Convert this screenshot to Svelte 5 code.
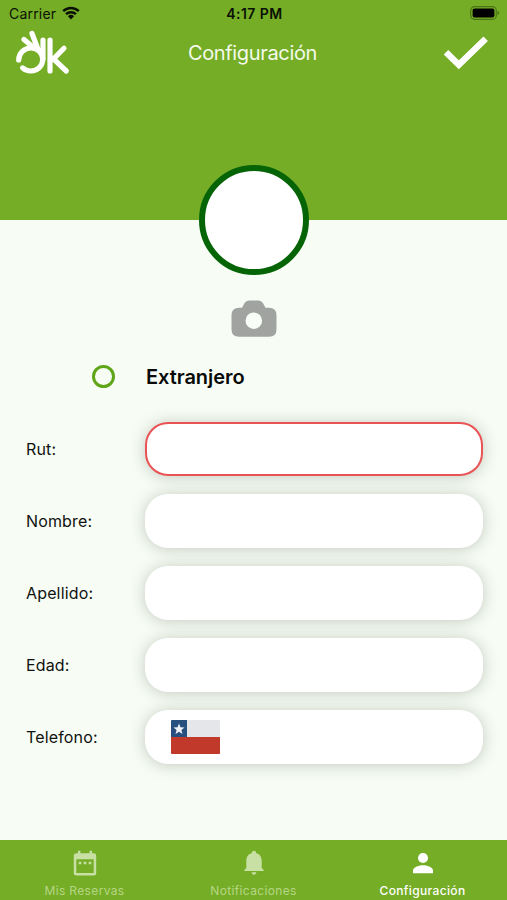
<script lang="ts">
  type Field = { id: string; label: string; invalid?: boolean; flag?: boolean };

  const fields: Field[] = [
    { id: 'rut', label: 'Rut:', invalid: true },
    { id: 'nombre', label: 'Nombre:' },
    { id: 'apellido', label: 'Apellido:' },
    { id: 'edad', label: 'Edad:' },
    { id: 'telefono', label: 'Telefono:', flag: true }
  ];

  const tabs = [
    { id: 'reservas', label: 'Mis Reservas' },
    { id: 'notificaciones', label: 'Notificaciones' },
    { id: 'configuracion', label: 'Configuración' }
  ];

  let activeTab = $state('configuracion');
  let extranjero = $state(false);
</script>

<div class="screen">
  <header class="header">
    <div class="status-bar">
      <div class="carrier">
        <span>Carrier</span>
        <svg class="wifi" viewBox="0 0 18 14" width="18" height="14">
          <path d="M1.2 5.1a11.2 11.2 0 0 1 15.6 0M4 8.2a7.2 7.2 0 0 1 10 0" fill="none" stroke="#0a1004" stroke-width="2.5" />
          <path d="M9 13.5 5.9 10.3a4.5 4.5 0 0 1 6.2 0z" fill="#0a1004" />
        </svg>
      </div>
      <span class="clock">4:17 PM</span>
      <svg class="battery" viewBox="0 0 30 14" width="30" height="14">
        <rect x=".7" y=".7" width="25.6" height="12.6" rx="3.8" fill="none" stroke="#4b7417" stroke-width="1.2" />
        <rect x="2.6" y="2.5" width="21.8" height="9" rx="2" fill="#000" />
        <path d="M27.6 4.8c2.2.7 2.2 3.7 0 4.4z" fill="#4b7417" />
      </svg>
    </div>

    <div class="title-bar">
      <svg class="logo" viewBox="0 0 56 48" width="56" height="48" fill="none" stroke="#fff" stroke-width="5.2" stroke-linecap="round">
        <path d="M3.700 31A12.200 12.200 0 0 1 16 19c6.800 0 11.700 5.200 11.700 11.500S22.600 42 15.800 42c-3.300 0-6-1-8.200-3.100" />
        <path d="M28 30.500V11M35 11v31M49 19.300 38.500 30 51.300 42" />
        <path d="M17 4.500 22.500 19M9 10.500l10 8.500M22 19l5 5" />
      </svg>
      <h1>Configuración</h1>
      <button class="save" aria-label="Guardar">
        <svg viewBox="0 0 48 36" width="48" height="36">
          <path d="M4 17.200 16.800 29.700 43.700 3.700" fill="none" stroke="#fff" stroke-width="6.400" />
        </svg>
      </button>
    </div>
  </header>

  <main class="content">
    <div class="avatar"></div>
    <button class="camera" aria-label="Cambiar foto">
      <svg viewBox="0 0 46 38" width="46" height="38">
        <path d="M8 7.800h3l2.600-4.800Q15 .5 18 .5h9.500q3 0 4.400 2.500l2.600 4.800h3.500q7.500 0 7.500 7.500v14q0 7.500-7.500 7.500H8q-7.500 0-7.500-7.500v-14q0-7.500 7.500-7.500z" fill="#a1a3a1" />
        <circle cx="22.800" cy="20.700" r="8.300" fill="#f8fdf7" />
      </svg>
    </button>

    <div class="foreigner">
      <button class="radio" class:checked={extranjero} aria-label="Extranjero" onclick={() => (extranjero = !extranjero)}></button>
      <span>Extranjero</span>
    </div>

    <form class="fields">
      {#each fields as field}
        <div class="row">
          <label for={field.id}>{field.label}</label>
          <div class="field" class:invalid={field.invalid}>
            {#if field.flag}
              <svg class="flag" viewBox="0 0 49 34" width="49" height="34">
                <rect width="49" height="34" rx="1" fill="#e5e6e9" />
                <path d="M0 17h49v16a1 1 0 0 1-1 1H1a1 1 0 0 1-1-1z" fill="#c0392b" />
                <path d="M0 1a1 1 0 0 1 1-1h15v17H0z" fill="#28507f" />
                <path d="M8 3.600 9.500 7.300l4 .2-3.100 2.500 1.100 3.900L8 11.700l-3.500 2.200 1.100-3.900L2.500 7.500l4-.2z" fill="#eef1f5" />
              </svg>
            {/if}
            <input id={field.id} type="text" />
          </div>
        </div>
      {/each}
    </form>
  </main>

  <nav class="tabs">
    {#each tabs as tab}
      <button class="tab" class:active={activeTab === tab.id} onclick={() => (activeTab = tab.id)}>
        <svg viewBox="0 0 26 26" width="26" height="26" fill="currentColor">
          {#if tab.id === 'reservas'}
            <path d="M6 .8h2.400v2.400h9.200V.8H20v2.400h1.700q2.500 0 2.500 2.500v17.200q0 2.500-2.500 2.500H4.300q-2.500 0-2.500-2.500V5.700q0-2.500 2.500-2.500H6zM4.300 9.200v13.700h17.400V9.200zM6.700 11.800h2.600v2.500H6.700zm5 0h2.600v2.500h-2.600zm5 0h2.600v2.500h-2.600z" fill-rule="evenodd" />
          {:else if tab.id === 'notificaciones'}
            <path d="M13 .8a1.900 1.900 0 0 1 1.900 2.300C18.600 4 20.700 7 20.700 10.800v7.100l2 2v1.200H3.300v-1.200l2-2v-7.100C5.300 7 7.400 4 11.100 3.100A1.900 1.900 0 0 1 13 .8zM10.600 22.300h4.800a2.400 2.400 0 0 1-4.800 0z" />
          {:else}
            <circle cx="13" cy="8" r="5" />
            <path d="M3 23.200v-2.700c0-3.400 6.700-5.200 10-5.200s10 1.800 10 5.200v2.700z" />
          {/if}
        </svg>
        <span>{tab.label}</span>
      </button>
    {/each}
  </nav>
</div>

<style>
  :global(body) {
    margin: 0;
  }

  .screen {
    display: flex;
    flex-direction: column;
    height: 900px;
    background: #f7fdf5;
    color: #101210;
    font-family: Inter, 'Liberation Sans', sans-serif;
    overflow: hidden;
  }

  button {
    padding: 0;
    border: none;
    background: none;
    font: inherit;
    color: inherit;
  }

  svg {
    display: block;
  }

  .header {
    flex: none;
    height: 219.5px;
    background: #75ad27;
  }

  .status-bar {
    display: grid;
    grid-template-columns: 1fr auto 1fr;
    align-items: center;
    height: 26px;
    padding: 0 7px 0 9px;
    color: #0a1004;
    font-size: 14px;
  }

  .carrier {
    display: flex;
    align-items: center;
    gap: 6px;
    letter-spacing: 0.2px;
  }

  .clock {
    font-weight: 600;
    letter-spacing: 0.45px;
  }

  .battery {
    justify-self: end;
  }

  .title-bar {
    display: grid;
    grid-template-columns: 1fr auto 1fr;
    align-items: center;
    height: 53px;
    padding: 0 17px 0 15px;
  }

  h1 {
    margin: 0;
    color: #f4faea;
    font-size: 20px;
    font-weight: 400;
    letter-spacing: -0.34px;
  }

  .save {
    justify-self: end;
  }

  .content {
    display: flex;
    flex: 1;
    flex-direction: column;
    align-items: center;
  }

  .avatar {
    box-sizing: border-box;
    width: 110px;
    height: 110px;
    margin-top: -55px;
    border: 6px solid #056405;
    border-radius: 50%;
    background: #fff;
  }

  .camera {
    margin-top: 25px;
  }

  .foreigner {
    display: flex;
    align-items: center;
    align-self: stretch;
    gap: 31px;
    height: 30px;
    margin-top: 24px;
    padding-left: 92px;
    color: #090b09;
    font-size: 20px;
    font-weight: 600;
    letter-spacing: -0.05px;
  }

  .radio {
    box-sizing: border-box;
    width: 23px;
    height: 23px;
    border: 3px solid #5fa51a;
    border-radius: 50%;
  }

  .radio.checked {
    background: #5fa51a;
  }

  .fields {
    display: flex;
    flex-direction: column;
    align-self: stretch;
    gap: 18px;
    margin-top: 30px;
    padding: 0 24px 0 26px;
  }

  .row {
    display: grid;
    grid-template-columns: 119px minmax(0, 1fr);
    align-items: center;
  }

  label {
    font-size: 16px;
    letter-spacing: 0.15px;
  }

  .field {
    display: flex;
    align-items: center;
    box-sizing: border-box;
    height: 54px;
    padding: 0 25px;
    border: 1px solid transparent;
    border-radius: 23px;
    background: #fff;
    box-shadow: 0 1px 15px rgba(40, 45, 25, 0.25);
  }

  .field.invalid {
    border: 2px solid #ea5355;
  }

  .flag {
    flex: none;
    margin-right: 14px;
  }

  input {
    flex: 1;
    min-width: 0;
    padding: 0;
    border: none;
    outline: none;
    background: transparent;
    font: inherit;
    font-size: 16px;
  }

  .tabs {
    display: grid;
    grid-template-columns: repeat(3, 1fr);
    flex: none;
    height: 60px;
    background: #75ad27;
  }

  .tab {
    display: flex;
    flex-direction: column;
    align-items: center;
    gap: 7px;
    padding-top: 10px;
    color: #c8e0a4;
    font-size: 12px;
    line-height: 16px;
    letter-spacing: 0.35px;
  }

  .tab span {
    color: #b5d683;
  }

  .tab.active,
  .tab.active span {
    color: #fff;
    font-weight: 500;
  }
</style>
